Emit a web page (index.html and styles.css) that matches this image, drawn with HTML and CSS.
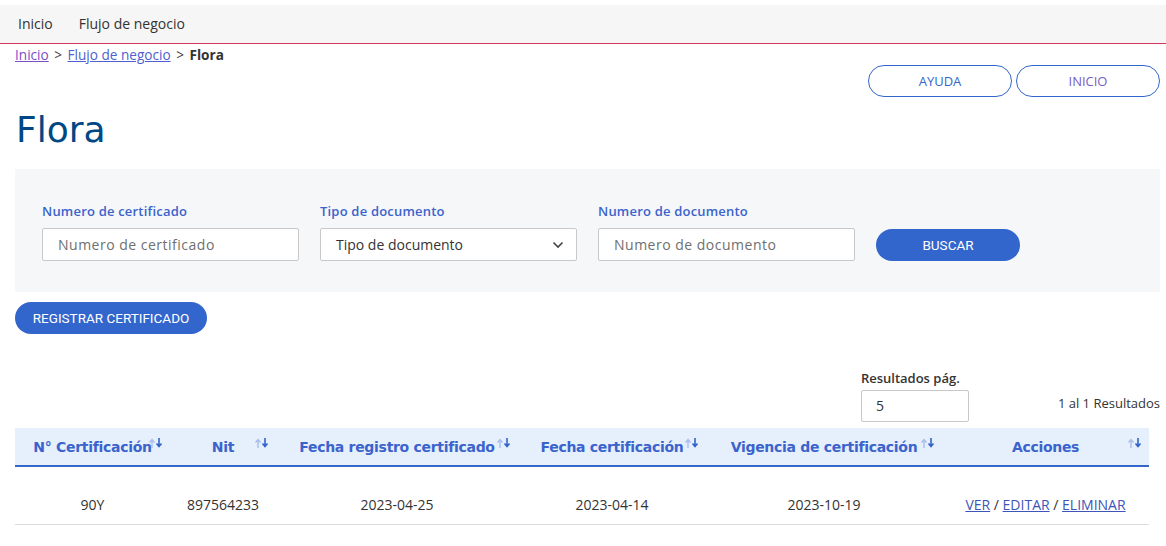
FILE: index.html
```html
<!DOCTYPE html>
<html lang="es">
<head>
<meta charset="utf-8">
<title>Flora</title>
<link rel="stylesheet" href="styles.css">
</head>
<body>
<nav class="topnav">
  <a class="nav-item">Inicio</a>
  <a class="nav-item">Flujo de negocio</a>
</nav>
<main class="page">
  <div class="crumbs">
    <a href="#" class="crumb visited">Inicio</a>
    <span class="sep">&gt;</span>
    <a href="#" class="crumb">Flujo de negocio</a>
    <span class="sep">&gt;</span>
    <b class="current">Flora</b>
  </div>
  <div class="top-actions">
    <button class="btn-outline">AYUDA</button>
    <button class="btn-outline purple">INICIO</button>
  </div>
  <h1 class="title">Flora</h1>
  <section class="filters">
    <div class="field">
      <label class="flabel">Numero de certificado</label>
      <input class="finput" type="text" placeholder="Numero de certificado">
    </div>
    <div class="field">
      <label class="flabel">Tipo de documento</label>
      <div class="fselect">
        <span>Tipo de documento</span>
        <svg width="12" height="8" viewBox="0 0 12 8"><path d="M1.5 1.5 L6 6 L10.5 1.5" fill="none" stroke="#444" stroke-width="1.6"/></svg>
      </div>
    </div>
    <div class="field">
      <label class="flabel">Numero de documento</label>
      <input class="finput" type="text" placeholder="Numero de documento">
    </div>
    <button class="btn-solid search">BUSCAR</button>
  </section>
  <button class="btn-solid register">REGISTRAR CERTIFICADO</button>
  <div class="results">
    <div class="per-page">
      <span class="pp-label">Resultados pág.</span>
      <div class="pp-input">5</div>
    </div>
    <span class="count">1 al 1 Resultados</span>
  </div>
  <table class="grid">
    <colgroup>
      <col style="width:155px"><col style="width:106px"><col style="width:242px"><col style="width:188px"><col style="width:236px"><col style="width:207px">
    </colgroup>
    <thead>
      <tr>
        <th>N° Certificación<span class="sort"><svg width="14" height="10" viewBox="0 0 14 10"><path d="M3 10V2M0.5 4.5L3 1.5L5.5 4.5" fill="none" stroke="#aabdeb" stroke-width="1.4"/><path d="M10 0V8M7.5 5.5L10 8.5L12.5 5.5" fill="none" stroke="#3463c9" stroke-width="1.6"/></svg></span></th>
        <th>Nit<span class="sort"><svg width="14" height="10" viewBox="0 0 14 10"><path d="M3 10V2M0.5 4.5L3 1.5L5.5 4.5" fill="none" stroke="#aabdeb" stroke-width="1.4"/><path d="M10 0V8M7.5 5.5L10 8.5L12.5 5.5" fill="none" stroke="#3463c9" stroke-width="1.6"/></svg></span></th>
        <th>Fecha registro certificado<span class="sort"><svg width="14" height="10" viewBox="0 0 14 10"><path d="M3 10V2M0.5 4.5L3 1.5L5.5 4.5" fill="none" stroke="#aabdeb" stroke-width="1.4"/><path d="M10 0V8M7.5 5.5L10 8.5L12.5 5.5" fill="none" stroke="#3463c9" stroke-width="1.6"/></svg></span></th>
        <th>Fecha certificación<span class="sort"><svg width="14" height="10" viewBox="0 0 14 10"><path d="M3 10V2M0.5 4.5L3 1.5L5.5 4.5" fill="none" stroke="#aabdeb" stroke-width="1.4"/><path d="M10 0V8M7.5 5.5L10 8.5L12.5 5.5" fill="none" stroke="#3463c9" stroke-width="1.6"/></svg></span></th>
        <th>Vigencia de certificación<span class="sort"><svg width="14" height="10" viewBox="0 0 14 10"><path d="M3 10V2M0.5 4.5L3 1.5L5.5 4.5" fill="none" stroke="#aabdeb" stroke-width="1.4"/><path d="M10 0V8M7.5 5.5L10 8.5L12.5 5.5" fill="none" stroke="#3463c9" stroke-width="1.6"/></svg></span></th>
        <th>Acciones<span class="sort"><svg width="14" height="10" viewBox="0 0 14 10"><path d="M3 10V2M0.5 4.5L3 1.5L5.5 4.5" fill="none" stroke="#aabdeb" stroke-width="1.4"/><path d="M10 0V8M7.5 5.5L10 8.5L12.5 5.5" fill="none" stroke="#3463c9" stroke-width="1.6"/></svg></span></th>
      </tr>
    </thead>
    <tbody>
      <tr>
        <td>90Y</td>
        <td>897564233</td>
        <td>2023-04-25</td>
        <td>2023-04-14</td>
        <td>2023-10-19</td>
        <td><a href="#" class="act">VER</a> / <a href="#" class="act">EDITAR</a> / <a href="#" class="act">ELIMINAR</a></td>
      </tr>
    </tbody>
  </table>
</main>
</body>
</html>
```
FILE: styles.css
```css
* { box-sizing: border-box; }
html, body { margin: 0; padding: 0; background: #fff; }
body {
  font-family: "Open Sans", "Noto Sans", sans-serif;
  color: #333;
  font-size: 14px;
}
.topnav {
  margin-top: 5px;
  height: 39px;
  background: #f5f6f5;
  border-bottom: 1px solid #d5375a;
  display: flex;
  align-items: center;
  padding-left: 18px;
  gap: 26px;
  padding-bottom: 1px;
}
.nav-item {
  font-size: 14px;
  color: #333;
}
.page {
  padding: 0 6px 0 15px;
}
.crumbs {
  font-size: 13.6px;
  height: 21px;
  line-height: 21px;
  margin-top: 0;
}
.crumb { color: #4f5fcf; text-decoration: underline; }
.crumb.visited { color: #7a4fc4; }
.sep { color: #444; margin: 0 2px; }
.current { color: #333; font-weight: 700; }
.top-actions {
  display: flex;
  justify-content: flex-end;
  gap: 4px;
}
.btn-outline {
  width: 144px;
  height: 32px;
  border: 1px solid #3366cc;
  border-radius: 16px;
  background: #fff;
  color: #3366cc;
  font-family: "Open Sans", sans-serif;
  font-size: 13px;
  cursor: pointer;
}
.btn-outline.purple { color: #7a5cc4; }
.title {
  margin: 13px 0 0 1px;
  font-family: "DejaVu Sans", sans-serif;
  font-weight: 400;
  font-size: 36px;
  line-height: 40px;
  color: #004884;
  letter-spacing: 0;
}
.filters {
  margin-top: 19px;
  height: 123px;
  background: #f6f7f9;
  display: flex;
  align-items: flex-end;
  gap: 21px;
  padding: 0 27px 31px 27px;
}
.field { display: flex; flex-direction: column; }
.flabel {
  font-family: "Open Sans", sans-serif;
  font-weight: 600;
  font-size: 13px;
  color: #3b63cc;
  margin-bottom: 8px;
  letter-spacing: 0.2px;
}
.finput, .fselect {
  width: 257px;
  height: 33px;
  border: 1px solid #c8c8c8;
  border-radius: 2px;
  background: #fff;
  padding: 0 15px;
  font-family: "Open Sans", sans-serif;
  font-size: 14px;
  color: #333;
  outline: none;
}
.finput::placeholder { color: #6f6f6f; letter-spacing: 0.5px; }
.fselect {
  display: flex;
  align-items: center;
  justify-content: space-between;
  padding-right: 12px;
  font-size: 14px;
}
.btn-solid {
  background: #3366cc;
  color: #fff;
  border: none;
  border-radius: 16px;
  font-family: "Roboto", sans-serif;
  font-size: 13.5px;
  cursor: pointer;
}
.search { width: 144px; height: 32px; }
.register {
  margin-top: 10px;
  width: 192px;
  height: 32px;
}
.results {
  display: flex;
  justify-content: flex-end;
  align-items: flex-end;
  margin-top: 38px;
  height: 50px;
}
.per-page {
  display: flex;
  flex-direction: column;
  width: 197px;
}
.pp-label {
  font-size: 13px;
  font-weight: 600;
  color: #333;
  line-height: 16px;
  margin-bottom: 4px;
}
.pp-input {
  width: 108px;
  height: 32px;
  border: 1px solid #c8c8c8;
  border-radius: 2px;
  padding-left: 14px;
  line-height: 30px;
  font-size: 14px;
}
.count {
  font-size: 13px;
  color: #333;
  align-self: center;
  margin-top: 12px;
}
.grid {
  margin-top: 6px;
  width: 1134px;
  border-collapse: collapse;
  table-layout: fixed;
}
.grid th {
  position: relative;
  height: 38px;
  background: #e6effc;
  border-bottom: 2px solid #3366cc;
  font-family: "DejaVu Sans", sans-serif;
  font-weight: 700;
  font-size: 14px;
  color: #3b63cc;
  text-align: center;
  padding: 0;
  letter-spacing: -0.3px;
}
.sort {
  position: absolute;
  right: 7px;
  top: 10px;
  line-height: 0;
}
.grid td {
  height: 58px;
  text-align: center;
  border-bottom: 1px solid #dcdcdc;
  font-size: 14px;
  color: #333;
  padding: 18px 0 0 0;
}
.act { color: #3d55b8; text-decoration: underline; }
```
